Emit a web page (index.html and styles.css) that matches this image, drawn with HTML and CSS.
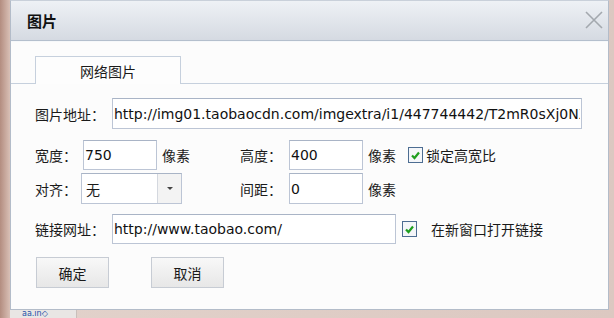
FILE: index.html
```html
<!DOCTYPE html>
<html>

<head>
  <meta charset="utf-8" />
  <link rel="stylesheet" href="styles.css">
</head>

<body>
  <div class="dialog">
    <div class="dialog-head">
      <span class="dialog-title">图片</span>
      <span class="dialog-close">
        <svg width="20" height="20" viewBox="0 0 20 20">
          <path d="M2 2 L18 18 M18 2 L2 18" stroke="#a3a8ae" stroke-width="1.6" fill="none" />
        </svg>
      </span>
    </div>
    <div class="tabs">
      <div class="tab">网络图片</div>
    </div>
    <div class="form">
      <div class="row row-url">
        <span class="label label-long">图片地址：</span>
        <input class="input input-url" type="text" value="http://img01.taobaocdn.com/imgextra/i1/447744442/T2mR0sXj0NXXXXXXXX_!!447744442.jpg">
      </div>
      <div class="row row-size">
        <div class="group">
          <span class="label label-short">宽度：</span>
          <input class="input input-num" type="text" value="750">
          <span class="unit">像素</span>
        </div>
        <div class="group">
          <span class="label label-mid">高度：</span>
          <input class="input input-num" type="text" value="400">
          <span class="unit">像素</span>
          <span class="check check-lock">
            <svg width="15" height="16" viewBox="0 0 15 16">
              <rect x="0.5" y="0.5" width="14" height="15" fill="#f4f6f9" stroke="#4d6d92" />
              <path d="M4 8.5 L6.5 11 L11 5.5" stroke="#1f9e1f" stroke-width="2.2" fill="none" />
            </svg>
          </span>
          <span class="check-text">锁定高宽比</span>
        </div>
      </div>
      <div class="row row-align">
        <div class="group">
          <span class="label label-align">对齐：</span>
          <div class="select">
            <span class="select-value">无</span>
            <span class="select-arrow"></span>
          </div>
        </div>
        <div class="group">
          <span class="label label-mid">间距：</span>
          <input class="input input-num" type="text" value="0">
          <span class="unit">像素</span>
        </div>
      </div>
      <div class="row row-link">
        <span class="label label-long">链接网址：</span>
        <input class="input input-link" type="text" value="http://www.taobao.com/">
        <span class="check check-new">
          <svg width="15" height="16" viewBox="0 0 15 16">
            <rect x="0.5" y="0.5" width="14" height="15" fill="#f4f6f9" stroke="#4d6d92" />
            <path d="M4 8.5 L6.5 11 L11 5.5" stroke="#1f9e1f" stroke-width="2.2" fill="none" />
          </svg>
        </span>
        <span class="check-text check-text-new">在新窗口打开链接</span>
      </div>
      <div class="row row-buttons">
        <button class="btn">确定</button>
        <button class="btn btn-cancel">取消</button>
      </div>
    </div>
  </div>
  <div class="page-foot">
    <span class="foot-link">aa.in◇</span>
  </div>
</body>

</html>
```

FILE: styles.css
```css
html,
body {
  margin: 0;
  padding: 0;
}

body {
  width: 614px;
  height: 318px;
  overflow: hidden;
  background: linear-gradient(90deg, #b38d80 0, #d9c0b6 10px, #e2d2cb 10px, #dcc8c1 100%);
  font-family: "Noto Sans CJK SC", "Liberation Sans", sans-serif;
  font-size: 14px;
  color: #1a1a1a;
}

.dialog {
  margin-left: 10px;
  width: 599px;
  height: 310px;
  box-sizing: border-box;
  border: 1px solid #b3bcc9;
  border-top-color: #c9d0da;
  background-color: #fcfcfc;
}

.dialog-head {
  height: 39px;
  display: flex;
  align-items: center;
  justify-content: space-between;
  padding: 0 4px 0 16px;
  background: linear-gradient(#eef1f5, #d5dae2);
  border-bottom: 1px solid #b4bfcd;
}

.dialog-title {
  font-size: 15px;
  font-weight: bold;
  color: #111;
}

.dialog-close {
  display: flex;
  width: 20px;
  height: 20px;
  margin-top: -1px;
}

.tabs {
  display: flex;
  padding: 14px 0 0 24px;
  height: 27px;
  border-bottom: 1px solid #c6d0dd;
  border-top: 1px solid #f6f8fa;
}

.tab {
  width: 144px;
  height: 27px;
  margin-bottom: -1px;
  display: flex;
  align-items: center;
  justify-content: center;
  border: 1px solid #c6d0dd;
  border-bottom: none;
  background-color: #fdfdfd;
  font-size: 14px;
}

.form {
  padding: 14px 0 0 24px;
}

.row {
  display: flex;
  align-items: center;
}

.group {
  display: flex;
  align-items: center;
}

.row-url {
  height: 31px;
}

.row-size {
  height: 30px;
  margin-top: 11px;
}

.row-align {
  height: 31px;
  margin-top: 3px;
}

.row-link {
  height: 30px;
  margin-top: 10px;
}

.row-buttons {
  height: 31px;
  margin-top: 13px;
  padding-left: 1px;
}

.row-size .group:first-child,
.row-align .group:first-child {
  width: 205px;
}

.label {
  flex: none;
  white-space: nowrap;
}

.label-long {
  width: 77px;
}

.label-short {
  width: 48px;
}

.label-align {
  width: 46px;
}

.label-mid {
  width: 49px;
}

.input {
  box-sizing: border-box;
  margin: 0;
  padding: 0 1px;
  border: 1px solid #bcc5d5;
  border-top-color: #a9b4c6;
  background-color: #fff;
  font-family: "DejaVu Sans", sans-serif;
  font-size: 14px;
  color: #111;
  outline: none;
}

.input-url {
  width: 470px;
  height: 31px;
}

.input-num {
  width: 74px;
  height: 30px;
}

.row-align .input-num {
  height: 31px;
}

.input-link {
  width: 284px;
  height: 30px;
}

.unit {
  margin-left: 5px;
}

.check {
  display: flex;
  width: 15px;
  height: 16px;
}

.check-lock {
  margin: 0 3px 0 12px;
}

.check-new {
  margin: 0 14px 0 6px;
}

.select {
  box-sizing: border-box;
  width: 101px;
  height: 31px;
  display: flex;
  border: 1px solid #bcc5d5;
  border-top-color: #a9b4c6;
  background-color: #fff;
}

.select-value {
  flex: 1;
  display: flex;
  align-items: center;
  padding-left: 4px;
}

.select-arrow {
  width: 23px;
  border-left: 1px solid #d4d8df;
  background: #f3f3f3;
  display: flex;
  align-items: center;
  justify-content: center;
}

.select-arrow::after {
  content: "";
  border-left: 3px solid transparent;
  border-right: 3px solid transparent;
  border-top: 3px solid #444;
}

.btn {
  box-sizing: border-box;
  width: 73px;
  height: 31px;
  margin: 0;
  padding: 0;
  border: 1px solid #c7ccd4;
  background: linear-gradient(#f8f8f8, #e7e7e7);
  font-family: "Noto Sans CJK SC", sans-serif;
  font-size: 14px;
  color: #1a1a1a;
}

.btn-cancel {
  margin-left: 42px;
}

.page-foot {
  display: flex;
  height: 8px;
  margin-left: 10px;
}

.foot-link {
  width: 67px;
  height: 8px;
  overflow: hidden;
  box-sizing: border-box;
  padding-left: 12px;
  background-color: #e9e6e4;
  border-right: 1px solid #c9bfba;
  font-family: "DejaVu Sans", sans-serif;
  font-size: 8px;
  line-height: 8px;
  color: #2350a8;
}
```
